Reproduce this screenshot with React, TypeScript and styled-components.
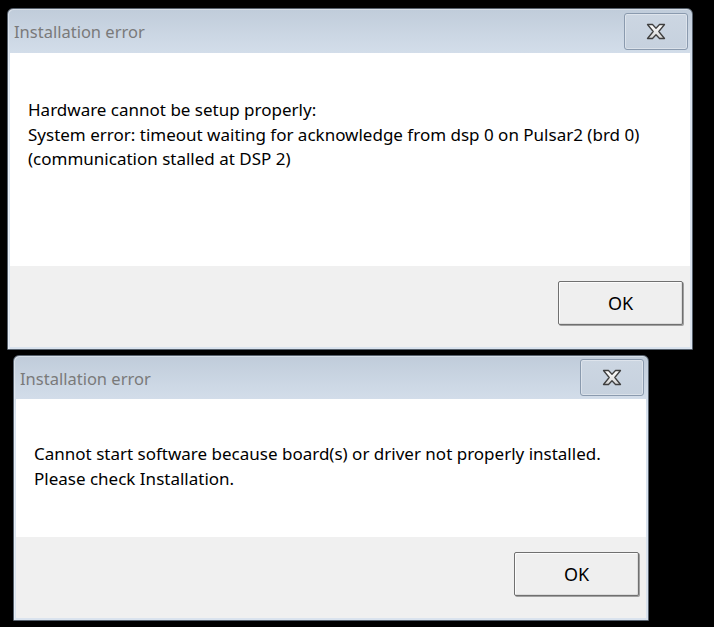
import React from "react";
import styled, { createGlobalStyle } from "styled-components";

const GlobalStyle = createGlobalStyle`
  html, body {
    margin: 0;
    padding: 0;
    background: #000;
  }
  body {
    width: 714px;
    height: 627px;
    overflow: hidden;
  }
`;

const Desktop = styled.div`
  display: flex;
  flex-direction: column;
  align-items: flex-start;
  padding-top: 8px;
`;

const Window = styled.div<{ $width: number; $left: number; $top: number }>`
  box-sizing: border-box;
  width: ${(p) => p.$width}px;
  margin-left: ${(p) => p.$left}px;
  margin-top: ${(p) => p.$top}px;
  border: 1px solid #56606c;
  border-radius: 6px 6px 0 0;
  background: linear-gradient(to bottom, #c0ccda 0px, #cdd8e5 30px, #d9e3ef 60px, #dae3ee 100%);
  padding: 0 2px 2px 2px;
  display: flex;
  flex-direction: column;
  box-shadow: inset 1px 1px 0 rgba(255, 255, 255, 0.35);
`;

const TitleBar = styled.div<{ $height: number }>`
  height: ${(p) => p.$height}px;
  display: flex;
  align-items: center;
  justify-content: space-between;
  padding: 0 2px 0 4px;
`;

const Title = styled.div`
  font-family: "Noto Sans", "Open Sans", sans-serif;
  font-size: 16.5px;
  color: #7a7a7a;
  padding-top: 1px;
`;

const CloseButton = styled.div<{ $mt: number }>`
  box-sizing: border-box;
  width: 64px;
  height: 37px;
  margin-top: ${(p) => p.$mt}px;
  align-self: flex-start;
  border: 1px solid #8a9aae;
  border-radius: 3px;
  background: linear-gradient(to bottom, #ccd6e2, #c6d1de);
  box-shadow: inset 0 0 0 1px rgba(255, 255, 255, 0.35);
  display: flex;
  align-items: center;
  justify-content: center;
`;

const Client = styled.div`
  display: flex;
  flex-direction: column;
`;

const Body = styled.div<{ $height: number; $pt: number }>`
  box-sizing: border-box;
  height: ${(p) => p.$height}px;
  background: #fff;
  padding: ${(p) => p.$pt}px 18px 0 18px;
  font-family: "Noto Sans", "Open Sans", sans-serif;
  font-size: 17px;
  line-height: 24.5px;
  color: #000;
`;

const Line = styled.div`
  white-space: nowrap;
`;

const Footer = styled.div`
  box-sizing: border-box;
  height: 81px;
  background: #f0f0f0;
  display: flex;
  justify-content: flex-end;
  align-items: flex-start;
  padding: 15px 7px 0 0;
`;

const OkButton = styled.button`
  box-sizing: border-box;
  width: 125px;
  height: 44px;
  border: 1px solid #707070;
  border-radius: 2px;
  background: #efefef;
  box-shadow: inset 1px 1px 0 #fcfcfc, inset -1px -1px 0 #dcdcdc, 1px 1px 0 #a0a0a0;
  font-family: "Noto Sans", "Open Sans", sans-serif;
  font-size: 18px;
  color: #000;
  padding: 0;
`;

const CloseIcon = () => (
  <svg width="22" height="17" viewBox="0 0 22 17">
    <defs>
      <linearGradient id="xg" x1="0" y1="0" x2="0" y2="1">
        <stop offset="0" stopColor="#ffffff" />
        <stop offset="1" stopColor="#d4d4d4" />
      </linearGradient>
    </defs>
    <path
      d="M2.5 1.5 L7.5 1.5 L11 5.2 L14.5 1.5 L19.5 1.5 L13.8 8.5 L19.5 15.5 L14.5 15.5 L11 11.8 L7.5 15.5 L2.5 15.5 L8.2 8.5 Z"
      fill="url(#xg)"
      stroke="#3f3f3f"
      strokeWidth="1.3"
      strokeLinejoin="round"
    />
  </svg>
);

interface DialogProps {
  width: number;
  left: number;
  top: number;
  titleHeight: number;
  closeTop: number;
  bodyHeight: number;
  bodyTop: number;
  lines: string[];
}

const Dialog = ({ width, left, top, titleHeight, closeTop, bodyHeight, bodyTop, lines }: DialogProps) => {
  return (
    <Window $width={width} $left={left} $top={top}>
      <TitleBar $height={titleHeight}>
        <Title>Installation error</Title>
        <CloseButton $mt={closeTop}>
          <CloseIcon />
        </CloseButton>
      </TitleBar>
      <Client>
        <Body $height={bodyHeight} $pt={bodyTop}>
          {lines.map((l) => (
            <Line key={l}>{l}</Line>
          ))}
        </Body>
        <Footer>
          <OkButton>OK</OkButton>
        </Footer>
      </Client>
    </Window>
  );
};

const App = () => {
  return (
    <>
      <GlobalStyle />
      <Desktop>
        <Dialog
          width={686}
          left={7}
          top={0}
          titleHeight={44}
          closeTop={4}
          bodyHeight={213}
          bodyTop={45}
          lines={[
            "Hardware cannot be setup properly:",
            "System error: timeout waiting for acknowledge from dsp 0 on Pulsar2 (brd 0)",
            "(communication stalled at DSP 2)",
          ]}
        />
        <Dialog
          width={636}
          left={13}
          top={5}
          titleHeight={43}
          closeTop={3}
          bodyHeight={138}
          bodyTop={43}
          lines={[
            "Cannot start software because board(s) or driver not properly installed.",
            "Please check Installation.",
          ]}
        />
      </Desktop>
    </>
  );
};

export default App;
